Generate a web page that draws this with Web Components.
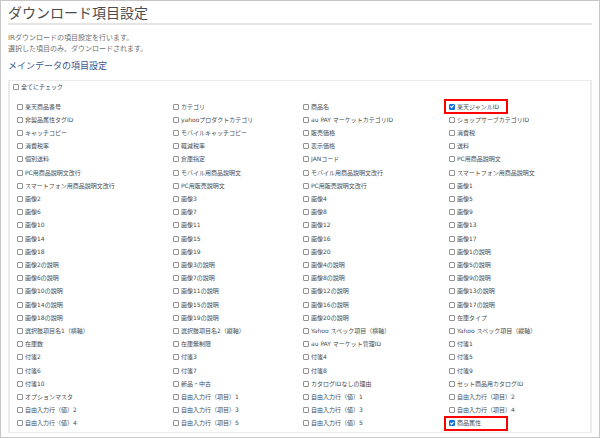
<!DOCTYPE html>
<html lang="ja">
<head>
<meta charset="utf-8">
<title>ダウンロード項目設定</title>
<style>
  body {
    margin: 0;
    background: #fff;
    color: #4c4c4c;
    font-family: "DejaVu Sans", "Noto Sans CJK JP", sans-serif;
    font-size: 6px;
  }
</style>
</head>
<body>
<download-settings>
  <span slot="title">ダウンロード項目設定</span>
  <span slot="lead">IRダウンロードの項目設定を行います。<br>選択した項目のみ、ダウンロードされます。</span>
  <span slot="section">メインデータの項目設定</span>
  <item-list></item-list>
</download-settings>

<script>
const ITEMS = [
  ["楽天商品番号", "カテゴリ", "商品名", "楽天ジャンルID"],
  ["非製品属性タグID", "yahooプロダクトカテゴリ", "au PAY マーケットカテゴリID", "ショップサーブカテゴリID"],
  ["キャッチコピー", "モバイルキャッチコピー", "販売価格", "消費税"],
  ["消費税率", "軽減税率", "表示価格", "送料"],
  ["個別送料", "倉庫指定", "JANコード", "PC用商品説明文"],
  ["PC用商品説明文改行", "モバイル用商品説明文", "モバイル用商品説明文改行", "スマートフォン用商品説明文"],
  ["スマートフォン用商品説明文改行", "PC用販売説明文", "PC用販売説明文改行", "画像1"],
  ["画像2", "画像3", "画像4", "画像5"],
  ["画像6", "画像7", "画像8", "画像9"],
  ["画像10", "画像11", "画像12", "画像13"],
  ["画像14", "画像15", "画像16", "画像17"],
  ["画像18", "画像19", "画像20", "画像1の説明"],
  ["画像2の説明", "画像3の説明", "画像4の説明", "画像5の説明"],
  ["画像6の説明", "画像7の説明", "画像8の説明", "画像9の説明"],
  ["画像10の説明", "画像11の説明", "画像12の説明", "画像13の説明"],
  ["画像14の説明", "画像15の説明", "画像16の説明", "画像17の説明"],
  ["画像18の説明", "画像19の説明", "画像20の説明", "在庫タイプ"],
  ["選択肢項目名1（横軸）", "選択肢項目名2（縦軸）", "Yahoo スペック項目（横軸）", "Yahoo スペック項目（縦軸）"],
  ["在庫数", "在庫無制限", "au PAY マーケット管理ID", "付箋1"],
  ["付箋2", "付箋3", "付箋4", "付箋5"],
  ["付箋6", "付箋7", "付箋8", "付箋9"],
  ["付箋10", "新品・中古", "カタログIDなしの理由", "セット商品用カタログID"],
  ["オプションマスタ", "自由入力行（項目）1", "自由入力行（値）1", "自由入力行（項目）2"],
  ["自由入力行（値）2", "自由入力行（項目）3", "自由入力行（値）3", "自由入力行（項目）4"],
  ["自由入力行（値）4", "自由入力行（項目）5", "自由入力行（値）5", "商品属性"]
];

const SELECTED = ["楽天ジャンルID", "商品属性"];

class CheckItem extends HTMLElement {
  constructor() {
    super();
    this.attachShadow({ mode: "open" });
  }

  static get styles() {
    return /* css */`
      :host {
        display: flex;
        align-items: center;
        position: relative;
      }

      label {
        display: flex;
        align-items: center;
        gap: 2px;
        line-height: 10px;
        white-space: nowrap;
      }

      input {
        appearance: none;
        box-sizing: border-box;
        flex: none;
        width: 6px;
        height: 6px;
        margin: 0;
        border: 1px solid #929292;
        border-radius: 1px;
        background: #fff;
      }

      input:checked {
        border-color: #0f6fe0;
        background: #0f6fe0;
      }

      input:checked::after {
        content: "";
        display: block;
        height: 4px;
        background: #fff;
        clip-path: polygon(0 50%, 20% 30%, 40% 55%, 85% 0, 100% 20%, 40% 100%);
      }

      /* red frame round the items to look at */
      :host([marked])::after {
        content: "";
        position: absolute;
        inset: -1px auto -1px -5px;
        width: 60px;
        border: 2px solid #f00;
        pointer-events: none;
      }
    `;
  }

  connectedCallback() {
    this.shadowRoot.innerHTML = /* html */`
    <style>${CheckItem.styles}</style>
    <label><input type="checkbox"><slot></slot></label>`;
    this.input = this.shadowRoot.querySelector("input");
    this.input.checked = this.hasAttribute("checked");
    this.input.addEventListener("change", () => {
      this.dispatchEvent(new CustomEvent("toggle-item", { detail: this.input.checked }));
    });
  }

  set checked(value) {
    this.input.checked = value;
  }
}

class ItemList extends HTMLElement {
  constructor() {
    super();
    this.attachShadow({ mode: "open" });
  }

  static get styles() {
    return /* css */`
      :host {
        display: flex;
        flex-direction: column;
        flex: 1;
        padding: 0 0 2px 7px;
        border: solid #ebebeb;
        border-width: 1px 2px;
      }

      .all {
        height: 11px;
        margin-left: -4px;
      }

      .grid {
        display: grid;
        grid-template-columns: 156fr 130fr 146fr 141fr;
        grid-auto-rows: 1fr;
        flex: 1;
        margin-top: 8px;
      }
    `;
  }

  connectedCallback() {
    this.render();
    this.shadowRoot.querySelector(".all").addEventListener("toggle-item", (ev) => this.checkAll(ev.detail));
  }

  checkAll(checked) {
    this.shadowRoot.querySelectorAll(".grid check-item").forEach((item) => { item.checked = checked; });
  }

  renderItem(name) {
    return `<check-item ${SELECTED.includes(name) ? "checked marked" : ""}>${name}</check-item>`;
  }

  render() {
    this.shadowRoot.innerHTML = /* html */`
    <style>${ItemList.styles}</style>
    <check-item class="all">全てにチェック</check-item>
    <div class="grid">${ITEMS.flat().map((name) => this.renderItem(name)).join("")}</div>`;
  }
}

class DownloadSettings extends HTMLElement {
  constructor() {
    super();
    this.attachShadow({ mode: "open" });
  }

  static get styles() {
    return /* css */`
      :host {
        display: flex;
        flex-direction: column;
        box-sizing: border-box;
        min-height: 100vh;
        padding: 4px 7px 4px;
        border: 1px solid #c6c6c6;
      }

      h1, h2, p {
        margin: 0;
        font-weight: normal;
      }

      h1 {
        padding-bottom: 1px;
        border-bottom: 2px solid #e4e4e4;
        font-size: 14px;
        line-height: 17px;
      }

      p {
        margin-top: 8px;
        color: #707070;
        font-size: 7px;
        line-height: 11px;
      }

      h2 {
        margin: 5px 0 8px;
        color: #3c5590;
        font-size: 9px;
        line-height: 12px;
      }
    `;
  }

  connectedCallback() {
    this.shadowRoot.innerHTML = /* html */`
    <style>${DownloadSettings.styles}</style>
    <h1><slot name="title"></slot></h1>
    <p><slot name="lead"></slot></p>
    <h2><slot name="section"></slot></h2>
    <slot></slot>`;
  }
}

customElements.define("check-item", CheckItem);
customElements.define("item-list", ItemList);
customElements.define("download-settings", DownloadSettings);
</script>
</body>
</html>
